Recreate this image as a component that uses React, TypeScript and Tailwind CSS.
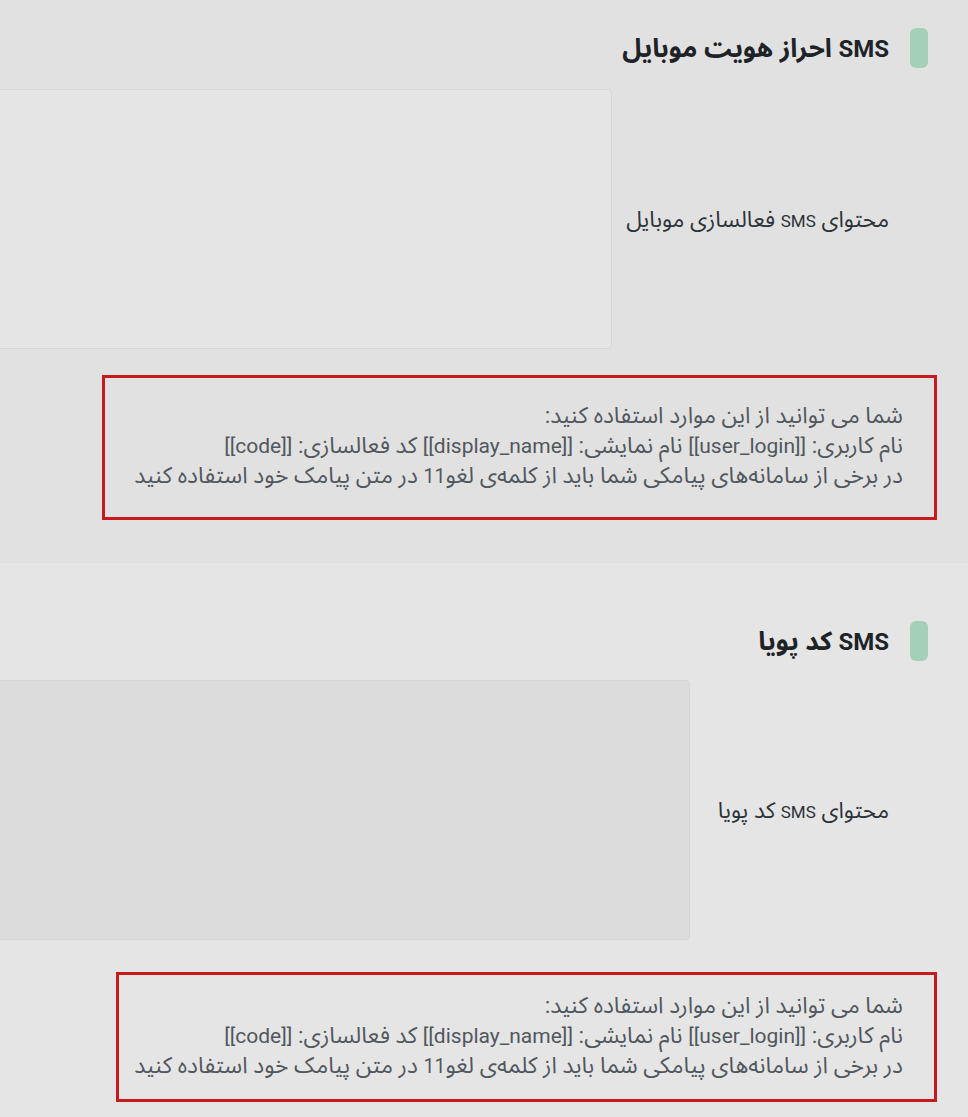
import React from "react";

type Section = {
  title: string;
  label: string;
  bg: string;
  areaBg: string;
  areaWidth: string;
  rowMt: string;
  gap: string;
  boxWidth: string;
  boxPad: string;
  boxMt: string;
  pt: string;
};

const fa = { fontFamily: "Roboto, 'Noto Sans Arabic', 'DejaVu Sans', sans-serif" };

// latin bits are set a little smaller than the persian text around them
function En({ children, size = "text-[21px]" }: { children: React.ReactNode; size?: string }) {
  return <span className={`${size} leading-none`}>{children}</span>;
}

function Help({ width, pad }: { width: string; pad: string }) {
  return (
    <div className={`border-[3px] border-[#c8191c] text-[22.8px] leading-[30px] text-[#50575e] pr-[31px] pl-[10px] ${width} ${pad}`}>
      <p>شما می توانید از این موارد استفاده کنید:</p>
      <p>
        نام کاربری: <En>[[user_login]]</En> نام نمایشی: <En>[[display_name]]</En> کد فعالسازی: <En>[[code]]</En>
      </p>
      <p>
        در برخی از سامانه‌های پیامکی شما باید از کلمه‌ی لغو<En size="text-[19.5px]">11</En> در متن پیامک خود استفاده کنید
      </p>
    </div>
  );
}

function SmsSection({ s }: { s: Section }) {
  return (
    <section className={`${s.bg} ${s.pt} pb-[42px] overflow-hidden`}>
      {/* heading with green marker */}
      <div className="flex items-center gap-[21px] pr-[40px]">
        <span className="w-[18px] h-[40px] rounded-[6px] bg-[#a3d0b6]" />
        <h2 className="text-[26px] leading-[32px] font-bold text-[#1d2327]">
          <En size="text-[24px]">SMS</En> {s.title}
        </h2>
      </div>

      <div className={`flex items-center pr-[79px] ${s.rowMt} ${s.gap}`}>
        <label className="text-[22.5px] leading-[30px] text-[#2c3338] whitespace-nowrap">
          محتوای <En size="text-[17px]">SMS</En> {s.label}
        </label>
        <textarea
          className={`h-[260px] shrink-0 rounded-[4px] border border-[#d6d6d6] ${s.areaBg} ${s.areaWidth}`}
        />
      </div>

      <div className={`flex pr-[31px] ${s.boxMt}`}>
        <Help width={s.boxWidth} pad={s.boxPad} />
      </div>
    </section>
  );
}

export default function App() {
  const sections: Section[] = [
    {
      title: "احراز هویت موبایل",
      label: "فعالسازی موبایل",
      bg: "bg-[#e1e1e1]",
      areaBg: "bg-[#e5e5e5]",
      areaWidth: "w-[700px]",
      rowMt: "mt-[21px]",
      gap: "gap-[14px]",
      boxWidth: "w-[835px]",
      boxPad: "pt-[23px] pb-[26px]",
      boxMt: "mt-[26px]",
      pt: "pt-[28px]",
    },
    {
      title: "کد پویا",
      label: "کد پویا",
      bg: "bg-[#e5e5e5]",
      areaBg: "bg-[#dcdcdc]",
      areaWidth: "w-[760px]",
      rowMt: "mt-[19px]",
      gap: "gap-[28px]",
      boxWidth: "w-[821px]",
      boxPad: "pt-[16px] pb-[18px]",
      boxMt: "mt-[32px]",
      pt: "pt-[58px]",
    },
  ];

  return (
    <div dir="rtl" style={fa} className="w-[968px] h-[1117px] overflow-hidden bg-[#e5e5e5]">
      <SmsSection s={sections[0]} />
      <div className="h-px bg-[#dedede]" />
      <SmsSection s={sections[1]} />
    </div>
  );
}
